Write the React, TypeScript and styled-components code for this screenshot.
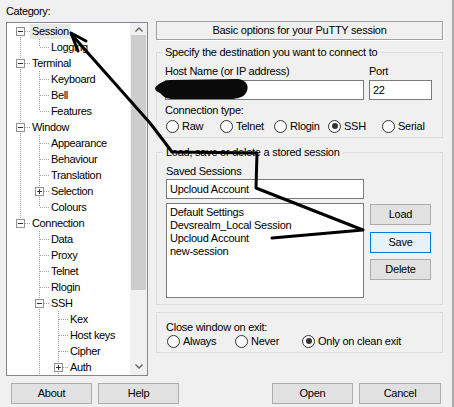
import React from 'react';
import styled, { createGlobalStyle } from 'styled-components';

const GlobalStyle = createGlobalStyle`
  html, body { margin: 0; padding: 0; background: #f0f0f0; }
  body {
    font-family: "Liberation Sans", Arial, sans-serif;
    font-size: 11px;
    letter-spacing: -0.25px;
    color: #000;
  }
  * { box-sizing: border-box; }
`;

const Window = styled.div`
  position: relative;
  width: 454px;
  height: 407px;
  background: #f0f0f0;
  border-right: 2px solid #a8a8a8;
  display: flex;
  flex-direction: column;
  overflow: hidden;
`;

const Main = styled.div`
  display: flex;
  gap: 8px;
  padding-left: 6px;
  height: 376px;
`;

const LeftPane = styled.div`
  width: 142px;
  display: flex;
  flex-direction: column;
`;

const CategoryLabel = styled.div`
  height: 22px;
  padding-top: 5px;
  line-height: 13px;
  letter-spacing: -0.4px;
`;

const TreeBox = styled.div`
  height: 354px;
  border: 1px solid #828790;
  background: #fff;
  display: flex;
`;

const TreeList = styled.div`
  flex: 1;
  overflow: hidden;
`;

const Row = styled.div`
  display: flex;
  align-items: center;
  height: 16px;
`;

const dot = '#a0a0a0';
const vLine = (y: number, h: number) =>
  `repeating-linear-gradient(to bottom, ${dot} 0 1px, transparent 1px 2px) 13px ${y}px / 1px ${h}px no-repeat`;
const hLine = `repeating-linear-gradient(to right, ${dot} 0 1px, transparent 1px 2px) 14px 8px / 9px 1px no-repeat`;

const Guide = styled.span<{ $on: boolean }>`
  flex: none;
  width: 19px;
  height: 16px;
  background: ${(p) => (p.$on ? vLine(0, 16) : 'none')};
`;

const Connector = styled.span<{ $up: boolean; $down: boolean }>`
  flex: none;
  width: 23px;
  height: 16px;
  display: flex;
  align-items: center;
  background: ${(p) =>
    [hLine, p.$up ? vLine(0, 8) : '', p.$down ? vLine(8, 8) : '']
      .filter(Boolean)
      .join(', ')};
`;

const Expander = styled.svg`
  margin-left: 9px;
  margin-top: 1px;
  display: block;
`;

const NodeLabel = styled.span<{ $selected?: boolean }>`
  padding: 0 2px;
  line-height: 15px;
  white-space: nowrap;
  letter-spacing: -0.35px;
  background: ${(p) => (p.$selected ? '#e8e8e8' : 'transparent')};
`;

const ScrollBar = styled.div`
  width: 17px;
  background: #f0f0f0;
  display: flex;
  flex-direction: column;
`;

const ScrollButton = styled.div<{ $h: number }>`
  height: ${(p) => p.$h}px;
  display: flex;
  align-items: center;
  justify-content: center;
`;

const Thumb = styled.div`
  height: 255px;
  margin: 0 1px;
  background: #cdcdcd;
`;

const Track = styled.div`
  flex: 1;
`;

const RightPane = styled.div`
  width: 287px;
  display: flex;
  flex-direction: column;
`;

const HeaderBox = styled.div`
  margin-top: 21px;
  height: 19px;
  border: 1px solid #a0a0a0;
  box-shadow: 1px 1px 0 #fff;
  display: flex;
  align-items: center;
  justify-content: center;
  line-height: 13px;
`;

const Group = styled.fieldset<{ $mt: number; $pl: number; $pb: number }>`
  margin: ${(p) => p.$mt}px 0 0;
  padding: 0 8px ${(p) => p.$pb}px ${(p) => p.$pl}px;
  border: 1px solid #dcdcdc;
  min-width: 0;
`;

const Legend = styled.legend`
  padding: 0 3px;
  margin-left: -3px;
  line-height: 13px;
`;

const PlainGroup = styled.div`
  margin-top: 7px;
  border: 1px solid #dcdcdc;
  padding: 7.5px 9px 4.5px;
`;

const Label = styled.div<{ $mt?: number }>`
  margin-top: ${(p) => p.$mt ?? 0}px;
  line-height: 13px;
  white-space: nowrap;
`;

const HostGrid = styled.div`
  margin-top: 6px;
  display: grid;
  grid-template-columns: 199px 63px;
  column-gap: 5px;
  row-gap: 2px;
`;

const TextInput = styled.div<{ $w?: number; $mt?: number }>`
  height: 20px;
  margin-top: ${(p) => p.$mt ?? 0}px;
  width: ${(p) => (p.$w ? `${p.$w}px` : 'auto')};
  border: 1px solid #7a7a7a;
  background: #fff;
  padding-left: 3px;
  line-height: 18px;
  white-space: nowrap;
`;

const RadioRow = styled.div<{ $cols: string; $mt: number }>`
  margin-top: ${(p) => p.$mt}px;
  display: grid;
  grid-template-columns: ${(p) => p.$cols};
  height: 13px;
  padding-left: 1px;
`;

const RadioItem = styled.span`
  display: flex;
  align-items: center;
  gap: 3px;
  white-space: nowrap;
  line-height: 13px;
`;

const RadioCircle = styled.span<{ $checked?: boolean }>`
  flex: none;
  width: 13px;
  height: 13px;
  border: 1px solid #333;
  border-radius: 50%;
  background: #fff;
  display: flex;
  align-items: center;
  justify-content: center;
  &::after {
    content: '';
    display: ${(p) => (p.$checked ? 'block' : 'none')};
    width: 6px;
    height: 6px;
    border-radius: 50%;
    background: #333;
  }
`;

const SessionRow = styled.div`
  margin-top: 4px;
  display: flex;
  gap: 6px;
`;

const ListBox = styled.div`
  width: 198px;
  height: 95px;
  border: 1px solid #7a7a7a;
  background: #fff;
  padding: 2px 0 0 3px;
`;

const ListItem = styled.div`
  line-height: 13px;
  white-space: nowrap;
`;

const ButtonColumn = styled.div`
  display: flex;
  flex-direction: column;
  gap: 6.5px;
  padding-top: 1px;
`;

const Button = styled.div<{ $w: number; $default?: boolean }>`
  width: ${(p) => p.$w}px;
  height: 21px;
  border: 1px solid ${(p) => (p.$default ? '#0078d7' : '#adadad')};
  background: ${(p) => (p.$default ? '#e5f1fb' : '#e1e1e1')};
  display: flex;
  align-items: center;
  justify-content: center;
  line-height: 13px;
`;

const BottomBar = styled.div`
  margin-top: 7px;
  display: flex;
  justify-content: space-between;
  padding: 0 11px 0 11px;
`;

const ButtonGroup = styled.div`
  display: flex;
  gap: 6px;
`;

const Overlay = styled.svg`
  position: absolute;
  left: 0;
  top: 0;
  pointer-events: none;
`;

type Node = { t: string; l: number; e?: '+' | '-'; sel?: boolean };

const nodes: Node[] = [
  { t: 'Session', l: 0, e: '-', sel: true },
  { t: 'Logging', l: 1 },
  { t: 'Terminal', l: 0, e: '-' },
  { t: 'Keyboard', l: 1 },
  { t: 'Bell', l: 1 },
  { t: 'Features', l: 1 },
  { t: 'Window', l: 0, e: '-' },
  { t: 'Appearance', l: 1 },
  { t: 'Behaviour', l: 1 },
  { t: 'Translation', l: 1 },
  { t: 'Selection', l: 1, e: '+' },
  { t: 'Colours', l: 1 },
  { t: 'Connection', l: 0, e: '-' },
  { t: 'Data', l: 1 },
  { t: 'Proxy', l: 1 },
  { t: 'Telnet', l: 1 },
  { t: 'Rlogin', l: 1 },
  { t: 'SSH', l: 1, e: '-' },
  { t: 'Kex', l: 2 },
  { t: 'Host keys', l: 2 },
  { t: 'Cipher', l: 2 },
  { t: 'Auth', l: 2, e: '+' },
  { t: 'TTY', l: 2 },
  { t: 'X11', l: 2 },
  { t: 'Tunnels', l: 2 },
  { t: 'Bugs', l: 2 },
  { t: 'More bugs', l: 2 },
  { t: 'Serial', l: 1 },
];

const VISIBLE_ROWS = 22;

const hasNext = (i: number) => {
  for (let j = i + 1; j < nodes.length; j++) {
    if (nodes[j].l < nodes[i].l) return false;
    if (nodes[j].l === nodes[i].l) return true;
  }
  return false;
};

const ancestorContinues = (i: number, k: number) => {
  for (let j = i - 1; j >= 0; j--) {
    if (nodes[j].l === k) return hasNext(j);
  }
  return false;
};

const ExpanderBox = ({ kind }: { kind: '+' | '-' }) => (
  <Expander width="9" height="9" viewBox="0 0 9 9">
    <rect x="0.5" y="0.5" width="8" height="8" fill="#fff" stroke="#919191" />
    <line x1="2" y1="4.5" x2="7" y2="4.5" stroke="#333" />
    {kind === '+' && <line x1="4.5" y1="2" x2="4.5" y2="7" stroke="#333" />}
  </Expander>
);

const Radio = ({ label, checked }: { label: string; checked?: boolean }) => (
  <RadioItem>
    <RadioCircle $checked={checked} />
    {label}
  </RadioItem>
);

export default function App() {
  return (
    <>
      <GlobalStyle />
      <Window>
        <Main>
          <LeftPane>
            <CategoryLabel>Category:</CategoryLabel>
            <TreeBox>
              <TreeList>
                {nodes.slice(0, VISIBLE_ROWS).map((n, i) => (
                  <Row key={i}>
                    {Array.from({ length: n.l }, (_, k) => (
                      <Guide key={k} $on={ancestorContinues(i, k)} />
                    ))}
                    <Connector $up={i > 0} $down={hasNext(i)}>
                      {n.e && <ExpanderBox kind={n.e} />}
                    </Connector>
                    <NodeLabel $selected={n.sel}>{n.t}</NodeLabel>
                  </Row>
                ))}
              </TreeList>
              <ScrollBar>
                <ScrollButton $h={12}>
                  <svg width="8" height="5" viewBox="0 0 8 5">
                    <path d="M0.5 4.5 L4 1 L7.5 4.5" fill="none" stroke="#606060" strokeWidth="1.3" />
                  </svg>
                </ScrollButton>
                <Thumb />
                <Track />
                <ScrollButton $h={17}>
                  <svg width="8" height="5" viewBox="0 0 8 5">
                    <path d="M0.5 0.5 L4 4 L7.5 0.5" fill="none" stroke="#606060" strokeWidth="1.3" />
                  </svg>
                </ScrollButton>
              </ScrollBar>
            </TreeBox>
          </LeftPane>

          <RightPane>
            <HeaderBox>Basic options for your PuTTY session</HeaderBox>

            <Group $mt={6} $pl={8} $pb={4.5}>
              <Legend>Specify the destination you want to connect to</Legend>
              <HostGrid>
                <Label>Host Name (or IP address)</Label>
                <Label>Port</Label>
                <TextInput />
                <TextInput>22</TextInput>
              </HostGrid>
              <Label $mt={3.5}>Connection type:</Label>
              <RadioRow $cols="repeat(5, 54px)" $mt={3}>
                <Radio label="Raw" />
                <Radio label="Telnet" />
                <Radio label="Rlogin" />
                <Radio label="SSH" checked />
                <Radio label="Serial" />
              </RadioRow>
            </Group>

            <Group $mt={8} $pl={9} $pb={6}>
              <Legend>Load, save or delete a stored session</Legend>
              <Label $mt={5.5}>Saved Sessions</Label>
              <TextInput $w={198} $mt={1.5}>Upcloud Account</TextInput>
              <SessionRow>
                <ListBox>
                  <ListItem>Default Settings</ListItem>
                  <ListItem>Devsrealm_Local Session</ListItem>
                  <ListItem>Upcloud Account</ListItem>
                  <ListItem>new-session</ListItem>
                </ListBox>
                <ButtonColumn>
                  <Button $w={61}>Load</Button>
                  <Button $w={61} $default>Save</Button>
                  <Button $w={61}>Delete</Button>
                </ButtonColumn>
              </SessionRow>
            </Group>

            <PlainGroup>
              <Label>Close window on exit:</Label>
              <RadioRow $cols="68px 67px auto" $mt={1}>
                <Radio label="Always" />
                <Radio label="Never" />
                <Radio label="Only on clean exit" checked />
              </RadioRow>
            </PlainGroup>
          </RightPane>
        </Main>

        <BottomBar>
          <ButtonGroup>
            <Button $w={81}>About</Button>
            <Button $w={81}>Help</Button>
          </ButtonGroup>
          <ButtonGroup>
            <Button $w={81}>Open</Button>
            <Button $w={82}>Cancel</Button>
          </ButtonGroup>
        </BottomBar>

        <Overlay width="454" height="407" viewBox="0 0 454 407">
          <path
            d="M155 88 C158 84 162 81 170 80 L238 79 C246 80 249 85 247 91 C245 97 238 99 230 99 L172 99 C165 99 162 95 160 93 C157 92 155 90 155 88 Z"
            fill="#0a0a0a"
          />
          <polyline
            points="72,35 150,123 163,140 172,152 257,153 256,188 363,230 272,238"
            fill="none"
            stroke="#000"
            strokeWidth="3"
            strokeLinejoin="round"
            strokeLinecap="round"
          />
          <polyline
            points="78,51 71,33 86,41"
            fill="none"
            stroke="#000"
            strokeWidth="3"
            strokeLinejoin="round"
            strokeLinecap="round"
          />
        </Overlay>
      </Window>
    </>
  );
}
